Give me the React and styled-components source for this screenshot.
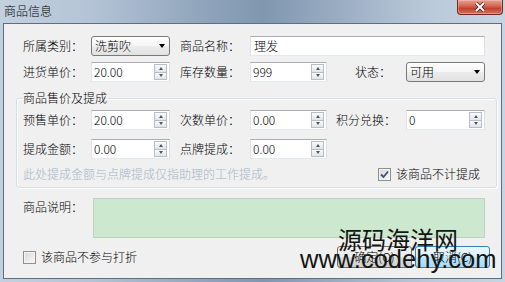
import styled, { createGlobalStyle } from 'styled-components';

const GlobalStyle = createGlobalStyle`
  html, body { margin: 0; padding: 0; }
  body {
    font-family: "Noto Sans CJK SC", sans-serif;
    font-size: 12px;
    font-weight: 300;
    color: #000;
  }
`;

const Window = styled.div`
  position: relative;
  width: 505px;
  height: 282px;
  display: flex;
  flex-direction: column;
  overflow: hidden;
  background: linear-gradient(90deg, #c3d0de 0%, #b4c4d6 18%, #93a7be 38%, #8097b0 52%, #98abc1 66%, #b9c8d8 84%, #c7d4e2 100%);
`;

const TitleBar = styled.div`
  height: 23px;
  display: flex;
  justify-content: space-between;
  align-items: flex-start;
  flex-shrink: 0;
`;

const Caption = styled.span`
  margin: 4px 0 0 4px;
  line-height: 14px;
`;

const CloseBtn = styled.div`
  width: 46px;
  height: 15px;
  margin-right: 2px;
  box-sizing: border-box;
  border: 1px solid #6e2a22;
  border-top: none;
  border-radius: 0 0 4px 4px;
  background: linear-gradient(#e4a293 0%, #d66b5a 40%, #c3402e 60%, #d7725a 100%);
  box-shadow: inset 0 0 0 1px rgba(255, 200, 190, 0.45);
  display: flex;
  align-items: center;
  justify-content: center;
`;

const Client = styled.div`
  flex: 1;
  margin: 0 3px 3px;
  border: 1px solid #5c6f86;
  background: #f0f0f0;
  display: flex;
  flex-direction: column;
  padding-top: 12px;
`;

const Row = styled.div`
  display: flex;
  align-items: ${p => p.$align || 'center'};
  height: ${p => p.$h || 20}px;
  margin-top: ${p => p.$mt || 0}px;
  padding-left: ${p => p.$pl ?? 19}px;
  padding-right: ${p => p.$pr || 0}px;
`;

const Label = styled.span`
  width: ${p => p.$w}px;
  margin-left: ${p => p.$ml || 0}px;
  padding-top: ${p => p.$pt || 0}px;
  flex-shrink: 0;
  line-height: 14px;
  white-space: nowrap;
`;

const TextBox = styled.div`
  width: ${p => p.$w}px;
  height: 20px;
  box-sizing: border-box;
  border: 1px solid;
  border-color: #abadb3 #dbdfe6 #e3e9ef #e2e3ea;
  background: #fff;
  padding-left: 3px;
  line-height: 18px;
`;

const Combo = styled.div`
  width: 79px;
  height: 20px;
  box-sizing: border-box;
  border: 1px solid #7a7a7a;
  border-radius: 3px;
  background: linear-gradient(#fdfdfd 0%, #f5f5f5 50%, #ececec 51%, #e2e2e2 100%);
  display: flex;
  align-items: center;
  justify-content: space-between;
  padding: 0 4px 0 3px;
  line-height: 14px;
`;

const Arrow = styled.span`
  width: 0;
  height: 0;
  border-left: 3.5px solid transparent;
  border-right: 3.5px solid transparent;
  border-top: 4px solid #000;
`;

const SpinEdit = styled.div`
  width: ${p => p.$w}px;
  height: 20px;
  box-sizing: border-box;
  border: 1px solid;
  border-color: #abadb3 #dbdfe6 #e3e9ef #e2e3ea;
  background: #fff;
  display: flex;
  align-items: center;
`;

const SpinValue = styled.span`
  flex: 1;
  padding-left: 2px;
  line-height: 14px;
`;

const SpinButtons = styled.div`
  width: 13px;
  height: 16px;
  margin-right: 2px;
  display: flex;
  flex-direction: column;
`;

const SpinBtn = styled.div`
  flex: 1;
  box-sizing: border-box;
  border: 1px solid #b5bfcb;
  margin-top: ${p => (p.$down ? -1 : 0)}px;
  background: linear-gradient(#fafafa, #e2e4e8);
  display: flex;
  align-items: center;
  justify-content: center;
`;

const Tri = styled.span`
  width: 0;
  height: 0;
  border-left: 2.5px solid transparent;
  border-right: 2.5px solid transparent;
  ${p => (p.$down ? 'border-top: 3px solid #555;' : 'border-bottom: 3px solid #555;')}
`;

const Group = styled.fieldset`
  margin: 9px 4px 0 12px;
  padding: 5px 0 6px 6px;
  border: 1px solid #d5dfe5;
  border-radius: 3px;
  box-shadow: inset 1px 1px 0 #fff, 1px 1px 0 #fff;
  min-width: 0;
`;

const Legend = styled.legend`
  padding: 0 1px 0 0;
  line-height: 14px;
`;

const Hint = styled.span`
  color: #a6b4c6;
  line-height: 14px;
  white-space: nowrap;
`;

const CheckWrap = styled.label`
  display: flex;
  align-items: center;
  gap: 5px;
  margin-left: ${p => (p.$right ? 'auto' : '0')};
  margin-right: ${p => p.$mr || 0}px;
  line-height: 14px;
  white-space: nowrap;
`;

const Box = styled.span`
  width: 13px;
  height: 13px;
  box-sizing: border-box;
  border: 1px solid #8e8f8f;
  background: linear-gradient(135deg, #d8d8d8, #f8f8f8);
  box-shadow: inset 0 0 0 1px #f4f4f4;
  display: flex;
  align-items: center;
  justify-content: center;
`;

const Memo = styled.div`
  width: 392px;
  height: 40px;
  box-sizing: border-box;
  border: 1px solid #bfd2c1;
  background: #cce8cf;
`;

const Buttons = styled.div`
  display: flex;
  gap: 3px;
  margin-left: auto;
`;

const Button = styled.div`
  width: 75px;
  height: 22px;
  box-sizing: border-box;
  border: 1px solid ${p => (p.$hot ? '#3c7fb1' : '#707070')};
  border-radius: 3px;
  background: ${p => (p.$hot
    ? 'linear-gradient(#eaf6fd 0%, #d9f0fc 50%, #bee6fd 51%, #a7d9f5 100%)'
    : 'linear-gradient(#f2f2f2 0%, #ebebeb 50%, #dddddd 51%, #cfcfcf 100%)')};
  display: flex;
  align-items: center;
  justify-content: center;
  line-height: 14px;
`;

const Watermark = styled.div`
  position: absolute;
  left: ${p => p.$x}px;
  top: ${p => p.$y}px;
  font-family: ${p => (p.$latin ? '"Liberation Sans", Arial, sans-serif' : '"Noto Sans CJK SC", sans-serif')};
  font-size: ${p => p.$size}px;
  font-weight: 400;
  line-height: 1;
  color: #141414;
  white-space: nowrap;
  pointer-events: none;
`;

const Spin = ({ w, value }) => (
  <SpinEdit $w={w}>
    <SpinValue>{value}</SpinValue>
    <SpinButtons>
      <SpinBtn><Tri /></SpinBtn>
      <SpinBtn $down><Tri $down /></SpinBtn>
    </SpinButtons>
  </SpinEdit>
);

const Check = ({ checked, children, right, mr }) => (
  <CheckWrap $right={right} $mr={mr}>
    <Box>
      {checked && (
        <svg width="9" height="9" viewBox="0 0 9 9">
          <path d="M1 4.5 L3.5 7 L8 1.5" fill="none" stroke="#3b4f87" strokeWidth="1.8" />
        </svg>
      )}
    </Box>
    {children}
  </CheckWrap>
);

export default function App() {
  return (
    <>
      <GlobalStyle />
      <Window>
        <TitleBar>
          <Caption>商品信息</Caption>
          <CloseBtn>
            <svg width="12" height="10" viewBox="0 0 12 10">
              <path d="M2 1 L10 9 M10 1 L2 9" stroke="#5a1a12" strokeWidth="3.4" />
              <path d="M2 1 L10 9 M10 1 L2 9" stroke="#fff" strokeWidth="2" />
            </svg>
          </CloseBtn>
        </TitleBar>
        <Client>
          <Row>
            <Label $w={68}>所属类别：</Label>
            <Combo>洗剪吹<Arrow /></Combo>
            <Label $w={70} $ml={10}>商品名称：</Label>
            <TextBox $w={235}>理发</TextBox>
          </Row>
          <Row $mt={6}>
            <Label $w={68}>进货单价：</Label>
            <Spin w={79} value="20.00" />
            <Label $w={70} $ml={10}>库存数量：</Label>
            <Spin w={77} value="999" />
            <Label $w={51} $ml={28}>状态：</Label>
            <Combo>可用<Arrow /></Combo>
          </Row>
          <Group>
            <Legend>商品售价及提成</Legend>
            <Row $pl={0}>
              <Label $w={68}>预售单价：</Label>
              <Spin w={79} value="20.00" />
              <Label $w={70} $ml={10}>次数单价：</Label>
              <Spin w={77} value="0.00" />
              <Label $w={70} $ml={9}>积分兑换：</Label>
              <Spin w={79} value="0" />
            </Row>
            <Row $pl={0} $mt={9}>
              <Label $w={68}>提成金额：</Label>
              <Spin w={79} value="0.00" />
              <Label $w={70} $ml={10}>点牌提成：</Label>
              <Spin w={77} value="0.00" />
            </Row>
            <Row $pl={0} $mt={8} $h={14}>
              <Hint>此处提成金额与点牌提成仅指助理的工作提成。</Hint>
              <Check checked right mr={16}>该商品不计提成</Check>
            </Row>
          </Group>
          <Row $mt={10} $h={40} $align="flex-start">
            <Label $w={70} $pt={2}>商品说明：</Label>
            <Memo />
          </Row>
          <Row $mt={8} $h={22} $pr={11}>
            <Check>该商品不参与打折</Check>
            <Buttons>
              <Button>确定(O)</Button>
              <Button $hot>取消(C)</Button>
            </Buttons>
          </Row>
        </Client>
        <Watermark $x={338} $y={227} $size={24}>源码海洋网</Watermark>
        <Watermark $x={300} $y={247} $size={25.5} $latin>www.codehy.com</Watermark>
      </Window>
    </>
  );
}
